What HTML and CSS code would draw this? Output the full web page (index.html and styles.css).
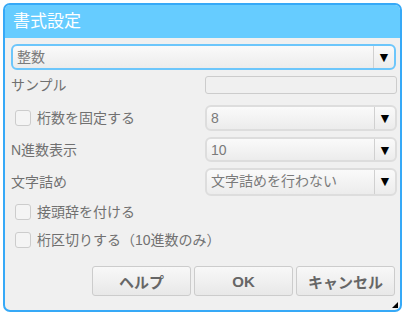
FILE: index.html
```html
<!DOCTYPE html>
<html lang="ja">
<head>
    <meta charset="UTF-8">
    <title>書式設定</title>
    <link rel="stylesheet" href="styles.css">
</head>
<body>
    <div class="dialog">
        <div class="dialog-title">書式設定</div>
        <div class="dialog-body">
            <div class="combo focused">
                <span class="combo-text">整数</span>
                <span class="combo-arrow">▼</span>
            </div>

            <div class="form-grid">
                <div class="label sample-row">サンプル</div>
                <div class="sample-box sample-row"></div>

                <label class="label check-label"><span class="checkbox"></span>桁数を固定する</label>
                <div class="combo">
                    <span class="combo-text">8</span>
                    <span class="combo-arrow">▼</span>
                </div>

                <div class="label">N進数表示</div>
                <div class="combo">
                    <span class="combo-text">10</span>
                    <span class="combo-arrow">▼</span>
                </div>

                <div class="label">文字詰め</div>
                <div class="combo">
                    <span class="combo-text">文字詰めを行わない</span>
                    <span class="combo-arrow">▼</span>
                </div>
            </div>

            <div class="check-list">
                <label class="check-label"><span class="checkbox"></span>接頭辞を付ける</label>
                <label class="check-label"><span class="checkbox"></span>桁区切りする（10進数のみ）</label>
            </div>

            <div class="buttons">
                <button type="button">ヘルプ</button>
                <button type="button">OK</button>
                <button type="button">キャンセル</button>
            </div>
        </div>
        <!-- resize grip -->
        <div class="grip"></div>
    </div>
</body>
</html>
```

FILE: styles.css
```css
body {
    margin: 0;
    padding: 3px;
    background-color: #ffffff;
    font-family: "Liberation Sans", "Noto Sans CJK JP", sans-serif;
    font-size: 14px;
    color: #707070;
}
.dialog {
    position: relative;
    width: 395px;
    height: 305px;
    border: 2px solid #36a9f7;
    border-radius: 7px;
    background-color: #f0f0f0;
    overflow: hidden;
}
.dialog-title {
    height: 33px;
    padding-left: 8px;
    background-color: #66ccff;
    color: #ffffff;
    font-size: 17px;
    line-height: 33px;
}
.dialog-body {
    padding: 6px 4px 0 6px;
}
.combo {
    display: flex;
    height: 22px;
    border: 2px solid #dddddd;
    border-radius: 6px;
    background: linear-gradient(#fafafa, #ececec);
    line-height: 22px;
}
.combo.focused {
    border-color: #6cc6fb;
}
.combo-text {
    flex: 1;
    padding-left: 4px;
    color: #7a7a7a;
}
.combo-arrow {
    width: 20px;
    border-left: 1px solid #d0d0d0;
    color: #000000;
    font-size: 14px;
    text-align: center;
}
.form-grid {
    display: grid;
    grid-template-columns: 194px 192px;
    grid-template-rows: 23px 26px 25px 28px;
    row-gap: 6px;
    margin-top: 6px;
    align-items: center;
}
.form-grid .combo {
    height: auto;
    align-self: stretch;
}
.sample-row {
    align-self: start;
}
.label {
    line-height: 18px;
}
.sample-box {
    height: 16px;
    border: 1px solid #cccccc;
    border-radius: 3px;
    background-color: #f0f0f0;
}
.check-label {
    display: flex;
    align-items: center;
    line-height: 18px;
}
.checkbox {
    width: 14px;
    height: 14px;
    margin: 0 6px 0 4px;
    border: 1px solid #cccccc;
    border-radius: 3px;
    background-color: #f4f4f4;
}
.check-list {
    display: flex;
    flex-direction: column;
    gap: 10px;
    margin-top: 7px;
}
.buttons {
    display: flex;
    justify-content: flex-end;
    gap: 3px;
    margin-top: 17px;
    padding-right: 1px;
}
.buttons button {
    width: 99px;
    height: 30px;
    border: 1px solid #cccccc;
    border-radius: 3px;
    background: linear-gradient(#f8f8f8, #e8e8e8);
    font-family: "Liberation Sans", "Noto Sans CJK JP", sans-serif;
    font-size: 15px;
    font-weight: bold;
    color: #666666;
}
.grip {
    position: absolute;
    right: 2px;
    bottom: 2px;
    width: 0;
    height: 0;
    border-left: 6px solid transparent;
    border-bottom: 6px solid #000000;
}
```
